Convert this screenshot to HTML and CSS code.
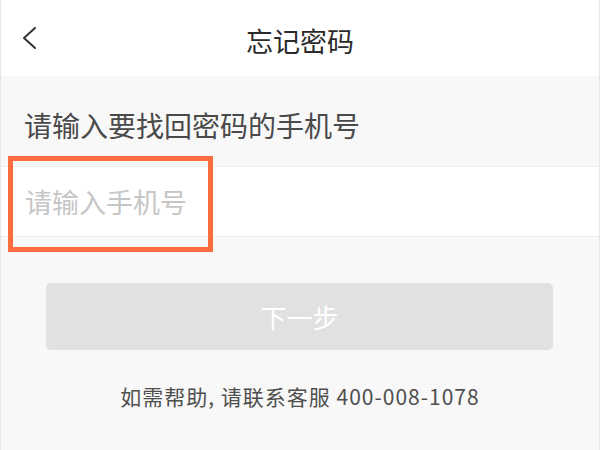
FILE: index.html
```html
<!DOCTYPE html>
<html lang="zh-CN">
<head>
<meta charset="utf-8">
<title>忘记密码</title>
<link rel="stylesheet" href="styles.css">
</head>
<body>
<div class="page">
  <header class="nav">
    <span class="back">
      <svg width="16" height="24" viewBox="0 0 16 24"><polyline points="13,2 2,12 13,22" fill="none" stroke="#333" stroke-width="2" stroke-linecap="round" stroke-linejoin="round"/></svg>
    </span>
    <h1 class="title">忘记密码</h1>
  </header>
  <div class="prompt">请输入要找回密码的手机号</div>
  <div class="field">
    <span class="placeholder">请输入手机号</span>
    <div class="highlight"></div>
  </div>
  <div class="actions">
    <button class="next">下一步</button>
  </div>
  <p class="help">如需帮助, 请联系客服 400-008-1078</p>
</div>
</body>
</html>
```

FILE: styles.css
```css
html, body {
  margin: 0;
  padding: 0;
}
body {
  width: 600px;
  height: 450px;
  overflow: hidden;
  background: #f8f8f8;
  font-family: "Noto Sans CJK SC", "Noto Sans", sans-serif;
}
.page {
  position: relative;
  height: 450px;
  border-left: 1px solid #e6e6e6;
  border-right: 1px solid #e6e6e6;
  box-sizing: border-box;
}
.nav {
  height: 76px;
  background: #fff;
  display: flex;
  align-items: center;
  justify-content: center;
  position: relative;
}
.back {
  position: absolute;
  left: 21px;
  top: 26px;
  display: flex;
}
.title {
  margin: 0;
  font-size: 27px;
  font-weight: 400;
  color: #2b2b2b;
  line-height: 1;
  margin-top: 4px;
}
.prompt {
  height: 90px;
  box-sizing: border-box;
  padding: 35px 0 0 23px;
  font-size: 28px;
  line-height: 1;
  color: #4a4a4a;
}
.field {
  position: relative;
  height: 69px;
  background: #fff;
  border-top: 1px solid #ececec;
  border-bottom: 1px solid #ececec;
  display: flex;
  align-items: center;
  padding-left: 24px;
}
.placeholder {
  font-size: 27px;
  line-height: 1;
  color: #c6c6c6;
}
.highlight {
  position: absolute;
  left: 7px;
  top: -11px;
  width: 205px;
  height: 96px;
  box-sizing: border-box;
  border: 5px solid #fb6d3f;
}
.actions {
  padding: 46px 46px 0 45px;
}
.next {
  display: block;
  width: 100%;
  height: 67px;
  border: none;
  border-radius: 5px;
  background: #e1e1e1;
  color: #fff;
  font-family: inherit;
  font-size: 26px;
  padding: 0;
}
.help {
  margin: 36px 0 0;
  text-align: center;
  font-size: 21px;
  line-height: 1;
  letter-spacing: 1px;
  color: #4f4f4f;
}
```
